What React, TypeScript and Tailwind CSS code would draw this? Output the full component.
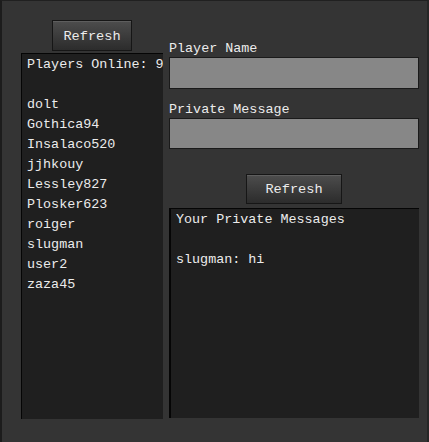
import React from 'react';

const players = ['dolt', 'Gothica94', 'Insalaco520', 'jjhkouy', 'Lessley827', 'Plosker623', 'roiger', 'slugman', 'user2', 'zaza45'];

const mono = { fontFamily: '"Liberation Mono", "DejaVu Sans Mono", monospace' };

const RefreshButton = ({ className }: { className: string }) => (
	<button
		className={`${className} flex items-center justify-center pt-[3px] border border-[#161616] bg-gradient-to-b from-[#4d4d4d] to-[#2c2c2c] text-[13.6px] text-[#ececec] shadow-[inset_0_1px_0_#5e5e5e]`}
	>
		Refresh
	</button>
);

const App = () => {
	return (
		<div
			style={mono}
			className="w-[429px] h-[442px] bg-[#343434] border-t border-t-[#202020] border-l-2 border-l-[#1c1c1c] border-r-2 border-r-[#262626] flex gap-[6px] pl-[19px] text-[#ececec] text-[13.4px]"
		>
			{/* Players column */}
			<div className="w-[142px] flex flex-col items-center pt-[19px]">
				<RefreshButton className="w-[80px] h-[31px]" />
				<div className="mt-[2px] w-full h-[366px] bg-[#1f1f1f] border-l border-t border-[#050505] pl-[5px] pt-[1px] leading-[20px] whitespace-nowrap overflow-hidden">
					<div>Players Online: 9</div>
					<div className="h-[20px]" />
					{players.map((name) => (
						<div key={name}>{name}</div>
					))}
				</div>
			</div>

			{/* Messages column */}
			<div className="w-[250px] flex flex-col pt-[40px]">
				<div className="h-[16px] leading-[16px]">Player Name</div>
				<div className="h-[32px] bg-[#878787] border border-[#1a1a1a]" />
				<div className="mt-[13px] h-[16px] leading-[16px]">Private Message</div>
				<div className="h-[31px] bg-[#878787] border border-[#1a1a1a]" />
				<div className="flex justify-center mt-[25px]">
					<RefreshButton className="w-[96px] h-[30px]" />
				</div>
				<div className="mt-[4px] h-[210px] bg-[#1f1f1f] border-l-2 border-t border-[#050505] pl-[5px] pt-[1px] leading-[20px] whitespace-nowrap">
					<div>Your Private Messages</div>
					<div className="h-[20px]" />
					<div>slugman: hi</div>
				</div>
			</div>
		</div>
	);
};

export default App;
